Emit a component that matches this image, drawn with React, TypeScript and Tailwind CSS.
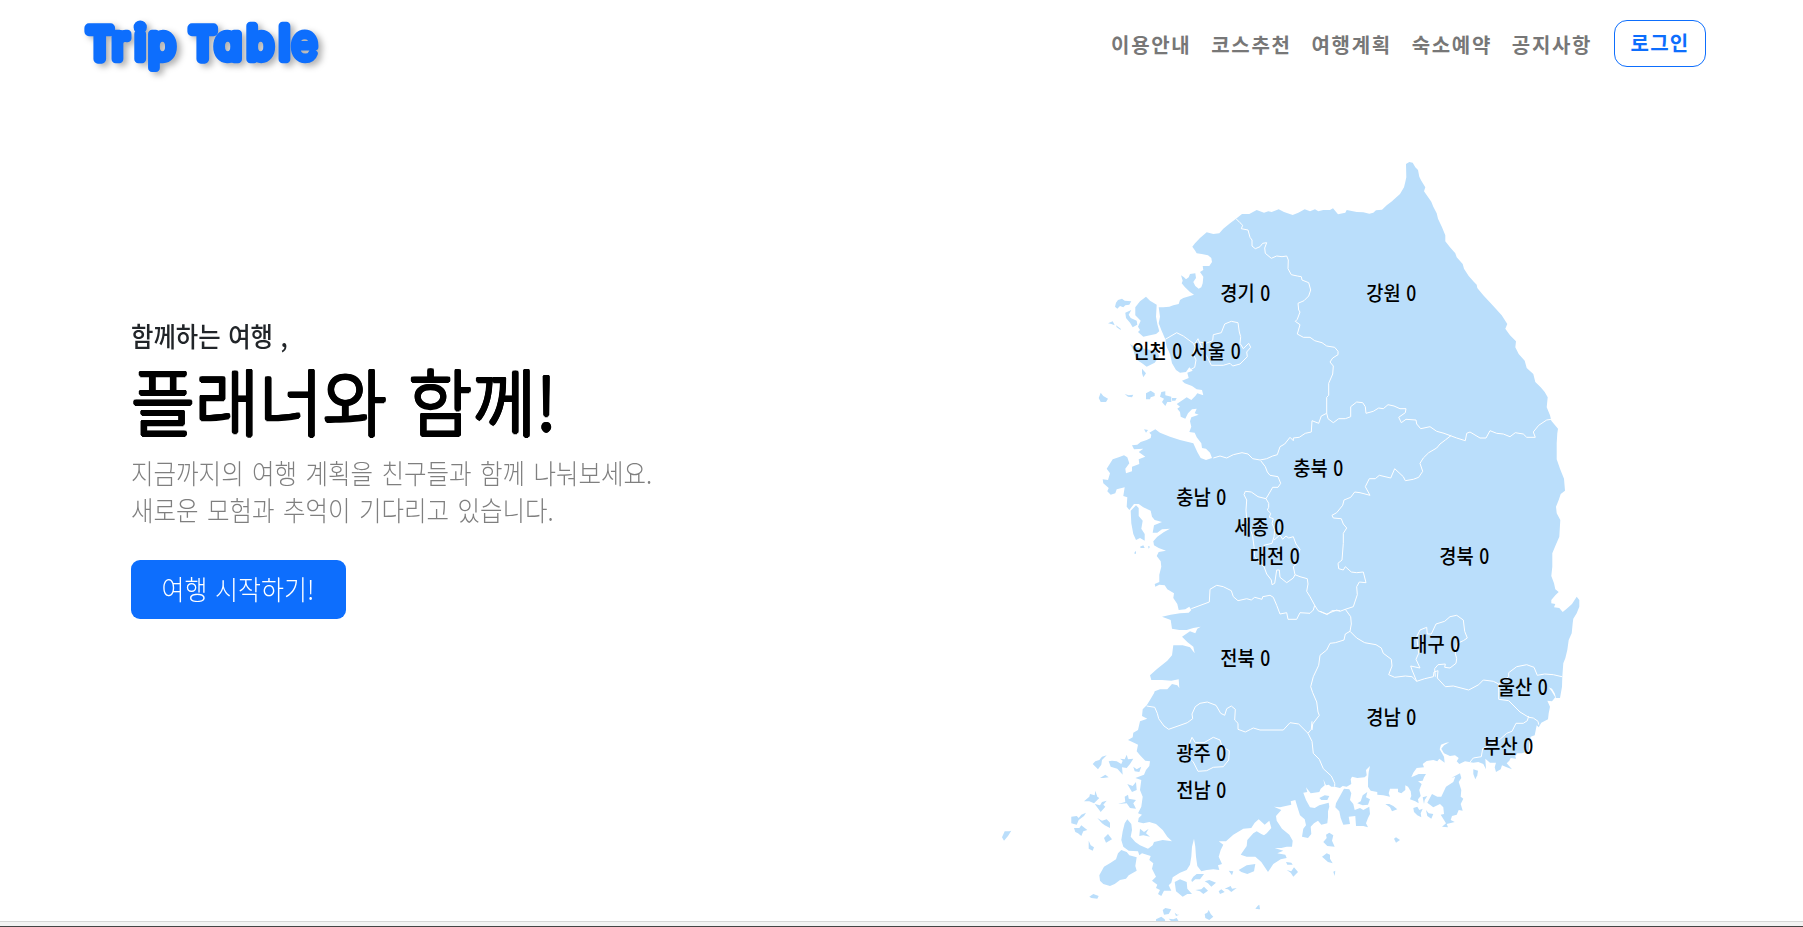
import React from "react";

const FONT = "font-['Noto_Sans_CJK_KR','Noto_Sans',sans-serif]";

// Survey sheets: each sheet has its own origin and is drawn at three units per pixel.
const SHEETS: Record<string, [number, number]> = {
  A: [1080, 150],
  B: [1320, 150],
  C: [1080, 420],
  D: [1320, 420],
  E: [980, 690],
  F: [1240, 690],
};

const toPoints = (sheet: string, pts: string) => {
  const [ox, oy] = SHEETS[sheet];
  return pts
    .trim()
    .split(/\s+/)
    .map((p) => {
      const [x, y] = p.split(",").map(Number);
      return `${(ox + x / 3).toFixed(1)},${(oy + y / 3).toFixed(1)}`;
    })
    .join(" ");
};

type Line = [string, string];

const COAST: Line[] = [
  ["A", "236,472 250,472 268,470 280,466 296,462 300,450 310,444 330,438 342,434 330,426 315,412 305,400 308,392 303,376 312,382 318,388 326,382 330,372 346,370 348,384 340,396 346,408 356,416 364,412 368,400 370,380 360,366 370,360 368,348 388,348 396,336 394,324 384,316 365,312 350,310 344,300 337,290 345,280 360,264 380,247 400,252 418,250 430,236 450,220 468,206 486,192 508,192 530,180 552,188 565,184 575,186 596,178 612,186 638,195 655,188 674,178 690,184 705,178 715,184 730,180 755,180"],
  ["B", "30,180 39,175 54,193 76,188 80,180 110,186 130,187 148,191 160,188 168,181 186,179 200,166 216,154 220,150 240,132 252,112 256,96 259,82 258,42 268,36 278,38 286,52 294,60 298,80 304,92 316,112 312,124 322,138 334,155 340,170 350,190 354,206 366,232 376,256 376,274 390,292 406,310 410,322 428,342 432,356 446,378 462,396 470,404 472,414 490,436 520,468 545,496 562,522 556,536 570,556 588,574 586,592 596,612 614,632 620,654 640,672 646,696 662,712 674,726 683,742 680,772 690,796 694,812 714,836 712,850 710,880"],
  ["D", "710,80 710,118 720,146 732,176 735,212 722,222 716,240 708,260 710,280 721,300 718,350 706,378 697,400 697,440 694,468 702,490 706,508 716,516 706,526 694,540 694,550 706,552 702,562 718,564 728,576 740,566 756,552 770,530 778,540 778,560 770,580 760,596 758,610 755,640 746,660 742,690 736,715 730,730 727,770 726,800 720,834 708,834 704,820 696,806 686,802 694,812 706,832 696,844 682,842 690,860 686,880 684,898 664,908 656,922"],
  ["F", "890,106 884,136 872,140 868,156 866,184 845,190 832,190 826,198 828,206 812,204 808,212 800,220 816,238 800,232 786,226 782,238 768,246 764,232 768,218 750,218 736,206 738,238 730,222 715,216 700,218 688,216 675,214 658,222 650,214 656,204 645,196 630,198 612,190 604,176 612,166 628,157 618,158 603,164 599,178 606,190 612,200 614,218 598,206 592,214 580,210 560,213 548,222 552,232 530,234 520,248 514,262 536,252 558,252 552,262 548,272 534,274 545,282 538,300 542,318 534,328 536,340 526,334 510,328 514,318 512,304 504,290 496,286 496,300 484,310 474,306 474,296 450,296 446,310 450,320 430,316 412,314 412,306 392,302 384,290 384,268 386,246 390,228 378,240 380,256 374,262 352,264 336,260 332,268 334,282 320,290 308,288 300,294 284,290 274,290 266,284 258,286 250,268 254,286 242,296 238,306 212,310 198,292 202,306 190,308 198,330 210,352 224,354 238,346 266,338 268,350 264,364 264,382 262,400 244,404 234,392 222,400 212,410 214,432 204,444 186,440 190,416 198,406 194,388 180,376 172,350 166,330 152,334 154,344 120,352 102,350 124,360 108,378 110,392 126,416 148,434 158,452 156,470 140,470 124,474 104,474 130,482 112,490 136,494 140,504 122,508 100,522 92,534 84,546 64,516 46,500 20,500 2,494 20,468 22,450 40,430 50,424 64,432 72,436 80,430 94,414 88,392 74,404 56,388 44,398 34,414 10,416"],
  ["E", "780,422 760,434 738,454 716,454 730,464 722,480 716,500 726,522 714,526 718,540 700,538 680,540 664,544 652,528 648,500 646,470 642,446 636,470 634,500 630,524 620,540 600,548 578,562 574,578 566,586 574,602 552,602 544,618 534,612 540,600 528,594 532,584 516,572 528,560 516,536 520,520 508,510 512,498 486,490 478,496 474,484 446,482 430,470 424,450 428,424 434,400 442,388 454,402 456,420 452,440 466,456 480,466 504,476 518,466 522,456 548,450 576,454 562,440 548,420 528,402 508,396 490,400 474,396 476,384 486,374 474,370 484,350 488,320 480,300 484,270 466,264 492,254 498,240 508,228 510,214 496,212 480,196 470,184 474,164 462,158 444,150 458,142 460,128 474,120 480,94 502,86 486,78 488,58 500,46 510,30 522,10"],
  ["C", "224,814 240,808 262,808 276,792 292,796 298,804 296,778 274,782 246,780 214,780 210,766 230,748 262,722 276,706 280,676 308,676 330,682 344,700 340,680 322,666 306,650 330,634 346,640 352,626 362,620 340,624 320,630 298,630 276,626 272,600 246,590 272,584 300,580 326,578 334,570 328,560 316,568 296,570 292,552 280,534 282,520 262,508 254,496 238,494 226,500 224,492 238,486 238,464 244,440 242,424 230,408 236,396 258,392 236,384 222,376 220,364 232,350 252,336 270,326 246,328 232,338 218,338 222,316 246,306 224,300 216,290 212,272 190,262 176,252 162,252 148,270 140,260 142,232 130,228 134,202 110,208 106,220 92,224 82,214 86,204 70,190 68,178 84,180 90,160 80,146 98,118 116,112 132,106 142,112 148,130 136,146 138,160 156,154 156,140 178,132 176,118 196,110 176,96 190,86 162,88 156,76 172,74 182,66 200,60 212,54 214,44 208,38 226,28 240,38 270,50 300,60 340,70 352,96 362,114 378,120 396,114 390,98 378,86 366,84 364,70 350,52 344,38 328,36 334,20"],
  ["A", "330,814 334,802 356,794 344,790 350,776 336,778 324,790 316,806 302,800 300,786 292,776 300,770 290,762 308,750 320,742 334,750 346,738 352,730 370,736 366,720 350,718 336,708 314,700 306,692 326,684 322,668 338,662 328,652 318,666 300,668 288,660 276,640 270,612 260,590 256,568 244,540 236,520 240,500"],
];

const ISLANDS: Line[] = [
  ["A", "105,470 108,458 114,450 126,446 134,452 154,454 148,464 136,466 130,472 120,468 112,476"],
  ["A", "166,472 180,454 198,440 210,452 230,464 228,500 232,522 238,544 228,552 210,556 190,560 174,546 180,540 174,530 182,512 166,496"],
  ["A", "136,488 154,480 146,494 152,504 170,512 172,524 158,532 150,518 138,504"],
  ["A", "84,520 98,514 104,526 94,522"],
  ["A", "108,526 122,536 122,540 110,532"],
  ["A", "150,582 164,590 230,604 238,618 224,638 200,650 186,640 168,628 160,600"],
  ["A", "186,656 198,670 190,682 186,670"],
  ["A", "62,728 70,738 84,746 78,756 62,756 56,744"],
  ["A", "134,732 146,736 160,734 156,742 144,740"],
  ["A", "198,730 212,722 224,730 224,738 212,742 210,748 198,748"],
  ["A", "244,726 256,724 256,736 274,740 274,756 262,756 256,768 246,756 252,746 240,740"],
  ["A", "276,744 290,744 286,752 276,752"],
  ["A", "192,838 204,840 198,848"],
  ["C", "152,272 168,256 176,264 176,288 188,302 184,326 194,342 194,362 180,354 168,360 160,342 154,310"],
  ["C", "162,400 168,392 168,402"],
  ["C", "180,380 190,376 194,384 182,384"],
  ["C", "204,378 210,380 206,386"],
  ["E", "338,222 346,214 358,210 366,200 380,196 366,210 364,224 354,238"],
  ["E", "386,214 396,212 410,214 424,222 428,212 420,206 434,208 440,194 444,208 460,206 450,222 440,234 426,232 428,254 412,236 392,230"],
  ["E", "360,264 376,254 386,262 370,264"],
  ["E", "460,230 470,238 484,230 478,246 464,244"],
  ["E", "442,282 458,288 468,276 470,300 456,306"],
  ["E", "434,320 444,314 446,326 468,330 460,340 468,356 450,354 440,340 414,342 436,336"],
  ["E", "312,334 328,320 330,312 344,316 346,302 352,320 358,324 342,340 328,334"],
  ["E", "344,342 360,346 366,336 380,332 370,344 376,350 362,366"],
  ["E", "274,380 290,378 296,384 304,374 318,368 312,378 296,390 290,404 274,400"],
  ["E", "352,384 366,392 380,388 390,398 390,414 374,406 366,400"],
  ["E", "282,414 298,414 304,406 322,420 310,424 304,438 294,430 286,426"],
  ["E", "372,444 384,432 396,448 378,458"],
  ["E", "326,452 332,466 342,472 338,482 326,476"],
  ["E", "66,442 74,424 88,424 94,422 84,438 72,452"],
  ["E", "358,556 372,530 392,518 408,508 414,490 424,480 440,486 448,496 470,502 466,528 470,542 446,556 438,566 420,570 404,582 390,588 370,582 360,572"],
  ["E", "480,416 492,426 506,416 498,430 510,440 490,436 478,438"],
  ["E", "328,620 340,612 356,618 352,626 334,624"],
  ["E", "584,576 600,568 620,576 622,596 636,612 622,612 608,620 588,604"],
  ["E", "634,570 640,560 650,552 672,552 660,568 646,568 636,576"],
  ["E", "674,574 688,570 708,578 694,590 684,580"],
  ["E", "646,600 664,598 672,590 684,602 670,612 660,604"],
  ["E", "716,604 724,598 734,606 720,612"],
  ["E", "734,596 752,588 756,596 770,594 754,606 744,598"],
  ["E", "746,542 760,544 756,556"],
  ["E", "776,540 800,526 826,522 822,544 802,552 784,546"],
  ["E", "548,660 556,654 574,658 566,672 552,674"],
  ["E", "528,688 544,680 554,688 556,694 528,696"],
  ["E", "674,672 682,668 686,660 692,672 700,680 688,690 676,684"],
  ["E", "584,668 592,674 598,674 588,678"],
  ["E", "566,686 580,688 590,684 596,694 574,694"],
  ["E", "828,656 838,644 840,658"],
  ["F", "288,340 300,318 312,296 328,298 334,310 330,330 340,342 344,360 360,354 370,360 388,350 390,372 384,384 378,400 384,412 370,408 348,408 346,378 326,380 330,402 310,404 302,384 298,364 286,352"],
  ["F", "352,340 362,334 368,316 382,306 378,322 390,328 384,344 368,346"],
  ["F", "562,338 576,312 592,320 604,320 618,290 640,276 646,260 634,264 660,250 664,264 656,276 664,300 662,320 670,326 662,342 668,362 656,360 650,374 636,378 632,390 644,396 620,402 624,412 606,410 618,400 602,374 612,372 610,352 600,342 580,352"],
  ["F", "520,354 532,350 538,360 548,356 542,370 544,382 532,376 522,366"],
  ["F", "558,360 566,370 580,372 574,386 562,378"],
  ["F", "548,322 562,318 554,330 552,342"],
  ["F", "700,238 714,242 712,256 706,268 700,252"],
  ["F", "436,342 448,342 460,348 472,358 456,364 450,352"],
  ["F", "462,446 468,442 480,450 468,458"],
  ["F", "250,456 260,444 258,434 268,428 280,436 276,452 284,470 262,468"],
  ["F", "246,500 260,490 270,494 270,506 278,520 264,516"],
  ["F", "140,540 154,544 162,532 174,546 160,560 152,548"],
  ["F", "138,516 154,518 158,524 142,524"],
  ["F", "280,545 286,542 284,558"],
  ["F", "46,656 56,644 58,658"],
  ["F", "238,324 254,316 268,318 262,330 244,330"],
];

const BORDERS: Line[] = [
  ["A", "468,206 480,218 488,226 484,236 504,240 510,262 516,270 516,288 526,296 540,290 548,280 560,278 554,294 556,310 574,325 590,318 606,320 620,318 625,330 624,356 634,374 652,378 664,380 666,390 686,398 692,420 686,438 672,452 654,460 656,480 660,486 652,508 646,514 660,524 652,552 670,562 690,562 704,572 726,578 740,588 764,592 774,604 774,614 758,624 750,636 760,648 758,672 746,700 746,736 740,742 740,790"],
  ["B", "20,790 24,806 40,818 56,806 76,806 92,800 92,770 110,756 128,758 136,770 138,790 160,784 176,774 190,776 204,764 222,768 240,776 258,776 256,788 236,802 244,818 258,808 288,810 290,822 302,836 330,830 350,844 372,850 394,858 410,864 436,872 440,850 450,846 480,864 498,864 510,842 530,850 550,852 570,860 586,848 610,852 620,862 646,862 640,846 656,826 680,810 694,808"],
  ["A", "740,790 724,798 716,820 696,812 694,846 676,850 658,862 640,864 640,872 630,862 614,882 600,890 592,914 578,918 560,926 540,930 518,926 504,912 486,908 460,914 440,924 420,918 400,924"],
  ["C", "542,122 556,140 562,156 570,166 594,170 602,190 594,202 578,202 570,216 558,236 566,250 566,262 562,270 572,280 568,292 580,296 576,310 584,330 582,350 576,370 552,376 552,400"],
  ["C", "558,236 534,230 514,216 496,214 492,224 500,240 498,270 500,300 512,330 518,350 522,380 524,410 540,430 552,440 560,462 574,480 576,494 584,490 590,450 598,450 600,472 620,488 640,474 645,464"],
  ["C", "582,360 600,345 608,358 618,348 626,354 640,350 648,372 660,388 656,400 652,430 640,440 645,464 660,470 682,476 684,492 680,514 690,530 704,556"],
  ["C", "334,566 388,546 390,508 410,496 430,500 454,512 460,530 474,542 500,536 514,540 524,532 546,538 548,530 570,526 580,532 590,556 600,582 620,578 624,598 650,598 660,578 690,580 700,570 704,556 714,572 742,584 756,572 780,572"],
  ["D", "60,574 50,570 20,582 0,574"],
  ["D", "394,46 376,60 360,72 350,84 326,98 310,114 300,130 308,154 296,172 280,178 256,182 250,170 224,146 212,174 178,166 166,176 148,176 136,200 150,226 120,218 104,216 92,232 72,240 68,256 50,278 36,286 40,294 64,296 70,312 80,324 70,340 70,370 66,420 54,430 56,446 70,450 76,440 94,456 110,458 130,456 138,488 118,486 110,500 112,524 100,560 76,568 60,574"],
  ["D", "76,568 92,590 94,612 90,634 110,654 134,668 168,674 184,684 190,700 214,718 216,738 206,764 224,772 256,768 276,770 290,784 314,776 340,770 342,756 354,752 352,774 376,800 400,798 446,810 476,794 490,780 520,784 536,792 566,770 566,758 590,740 620,734 642,742 652,766 674,762 700,764 726,770"],
  ["D", "536,792 536,838 566,842 600,876 626,892 640,894 654,904 656,914"],
  ["F", "866,78 862,92 850,100 828,100 816,124 800,130 782,146 740,170 728,176 724,200 700,204 690,216"],
  ["D", "90,634 76,642 72,660 46,668 30,670 20,690 0,706"],
  ["C", "720,706 716,736 700,770 692,800 698,818 710,846 714,876 718,886 698,912 696,930"],
  ["F", "204,130 216,154 220,190 238,208 250,236 274,258 284,280 284,290"],
  ["F", "216,94 214,118 204,130"],
  ["E", "500,48 524,52 532,70 536,86 552,108 566,118 600,106 622,98 638,86 636,72 646,50 660,40 682,36 708,46 722,70 734,76 740,56 754,48 766,58 764,90 774,100 774,118 796,126 812,118 820,114 840,120 870,120 910,120 930,98 956,102 984,130"],
  ["E", "628,204 626,166 636,142 646,158 672,158 700,142 720,150 726,170 748,182 746,210 730,230 700,232 680,242 654,244 640,216 628,204"],
  ["D", "290,784 276,750 272,738 300,744 288,718 296,700 290,650 300,630 320,622 322,642 334,642 348,612 374,604 390,590 410,586 430,600 434,634 442,654 430,662 412,670 406,700 410,716 408,730 390,744 374,742 376,732 354,734 344,746 346,770"],
  ["A", "358,576 378,580 398,572 400,554 424,548 434,522 454,514 474,518 478,546 482,560 480,580 490,596 506,580 512,592 500,606 502,620 480,642 458,648 450,640 430,646 394,646 384,626 370,600 358,576 354,566 344,582"],
  ["A", "256,568 290,548 310,558 340,580 346,592 340,612 348,630 344,652 330,660"],
];

const LABELS: [string, number, number][] = [
  ["경기", 1245.5, 294],
  ["강원", 1391.5, 294],
  ["인천", 1157.5, 352],
  ["서울", 1216, 352],
  ["충북", 1318.5, 469],
  ["충남", 1201.5, 498],
  ["세종", 1259.5, 528],
  ["대전", 1275, 557],
  ["전북", 1245.5, 659],
  ["경북", 1464.5, 557],
  ["대구", 1435.5, 645],
  ["울산", 1523, 688],
  ["경남", 1391.5, 718],
  ["부산", 1508.5, 747],
  ["광주", 1201.5, 754],
  ["전남", 1201.5, 791],
];

const MENU = ["이용안내", "코스추천", "여행계획", "숙소예약", "공지사항"];

function Logo() {
  return (
    <svg
      className="h-[92px] w-[260px] overflow-visible font-['Inter',sans-serif] [font-feature-settings:'cv11'] [filter:drop-shadow(4px_3px_3px_rgba(0,0,0,0.3))]"
      viewBox="80 0 260 92"
      role="img"
    >
      <text
        transform="translate(0 59.2) scale(1 1.06)"
        fontSize="43"
        fontWeight="400"
        fill="#0d6efd"
        stroke="#0d6efd"
        strokeWidth="8"
        strokeLinejoin="round"
        strokeLinecap="round"
      >
        <tspan x="87" fontSize="39.5" strokeWidth="9">T</tspan>
        <tspan x="112.3 135 148.8">rip</tspan>{" "}
        <tspan x="190" fontSize="39.5" strokeWidth="9">T</tspan>
        <tspan x="215 247 279.3">abl</tspan>
        <tspan x="291.5" fontSize="45" fontWeight="300" strokeWidth="6.4">e</tspan>
      </text>
    </svg>
  );
}

function Header() {
  return (
    <header className="flex h-[92px] shrink-0 items-start justify-between pl-20 pr-[97px]">
      <Logo />
      <div className="flex items-start pt-5">
        <nav className="flex pt-[10px]">
          {MENU.map((item) => (
            <a key={item} className="w-[100.2px] whitespace-nowrap text-[20px] leading-[30px] font-bold tracking-[1.7px] text-[#777]">
              {item}
            </a>
          ))}
        </nav>
        <button className="ml-[2px] flex h-[47px] w-[92px] justify-center rounded-[13px] border border-[#0d6efd] pt-[8px] text-[20px] leading-[28px] font-bold tracking-[1.2px] text-[#0d6efd]">
          로그인
        </button>
      </div>
    </header>
  );
}

function Hero() {
  return (
    <section className="flex w-[600px] flex-col items-start whitespace-nowrap pl-[130.5px] pt-[225px]">
      <p className="origin-left scale-x-[0.975] scale-y-[1.08] text-[25px] leading-[36px] font-medium text-[#212529] [word-spacing:2px]">
        함께하는 여행 ,
      </p>
      <h1 className="mt-[10px] origin-left scale-x-[0.993] scale-y-[1.04] text-[70px] leading-[72px] font-light text-black [word-spacing:6px] [text-shadow:1.5px_0_#000,-1.5px_0_#000,0_1.5px_#000,0_-1.5px_#000,1.1px_1.1px_#000,-1.1px_1.1px_#000,1.1px_-1.1px_#000,-1.1px_-1.1px_#000]">
        플래너와 함께!
      </h1>
      <p className="mt-[19px] origin-left scale-x-[0.98] text-[25px] leading-[37px] font-light text-[#7f7f7f] [word-spacing:3px]">
        <span className="block scale-y-[1.08]">지금까지의 여행 계획을 친구들과 함께 나눠보세요.</span>
        <span className="block scale-y-[1.08]">새로운 모험과 추억이 기다리고 있습니다.</span>
      </p>
      <button className="mt-[32px] h-[59px] w-[215px] rounded-[9px] bg-[#0d6efd] pb-[2px] text-[25px] leading-[55px] font-light text-white [word-spacing:2px]">
        <span className="block scale-y-[1.08]">여행 시작하기!</span>
      </button>
    </section>
  );
}

function RegionMap() {
  const coast = COAST.map(([s, p]) => toPoints(s, p)).join(" ");
  return (
    <svg className="h-[829px] w-[640px]" viewBox="980 92 640 829">
      <g fill="#badefb">
        <polygon points={coast} />
        {ISLANDS.map(([s, p], i) => (
          <polygon key={i} points={toPoints(s, p)} />
        ))}
      </g>
      <g fill="none" stroke="#fff" strokeWidth="1" strokeLinejoin="round">
        {BORDERS.map(([s, p], i) => (
          <polyline key={i} points={toPoints(s, p)} />
        ))}
      </g>
      <g fontSize="18.7" fontWeight="500" fill="#000">
        {LABELS.map(([name, x, y]) => (
          <text key={name} transform={`translate(${x - 25.2} ${y + 7}) scale(1 1.07)`}>
            {name}{" "}
            <tspan x="40" textLength="10" lengthAdjust="spacingAndGlyphs" fontSize="20.5">
              0
            </tspan>
          </text>
        ))}
      </g>
    </svg>
  );
}

export default function App() {
  return (
    <div className={`flex h-[927px] w-[1803px] flex-col overflow-hidden bg-white ${FONT}`}>
      <Header />
      <main className="flex h-[829px] shrink-0 justify-between pr-[183px]">
        <Hero />
        <RegionMap />
      </main>
      <footer className="flex h-[6px] flex-col border-b border-t border-b-[#444] border-t-[#d6d6d6] bg-[#f3f3f3]" />
    </div>
  );
}
